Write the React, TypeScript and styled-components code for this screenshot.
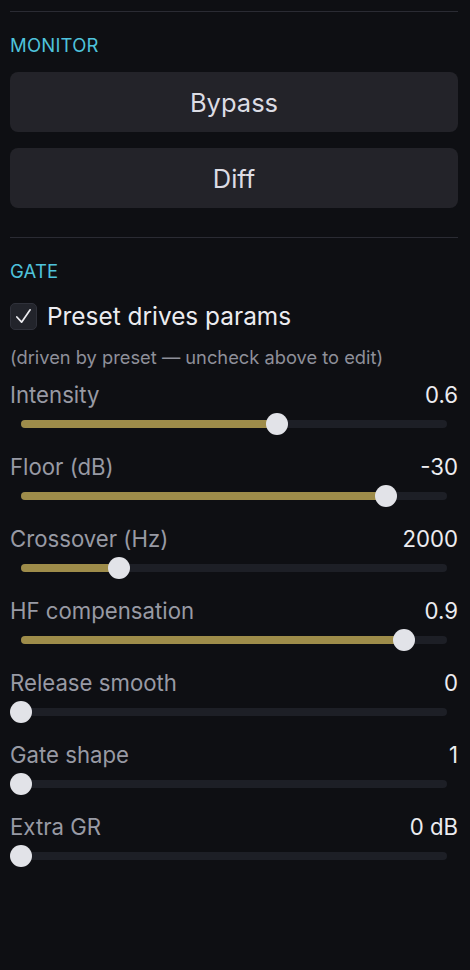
import React, { useState } from 'react';
import styled, { createGlobalStyle } from 'styled-components';

const Global = createGlobalStyle`
  html, body { margin: 0; padding: 0; background: #0e0f13; }
  body { font-family: Inter, "Noto Sans", sans-serif; -webkit-font-smoothing: antialiased; }
`;

const Panel = styled.div`
  background: #0e0f13;
  min-height: 970px;
  padding: 11px 12px 0 10px;
  box-sizing: border-box;
`;

const Section = styled.section`
  border-top: 1px solid #2a2b33;
  padding-top: 21px;
`;

const Heading = styled.div`
  color: #4ec3dc;
  font-size: 18.5px;
  line-height: 24px;
  letter-spacing: 0.2px;
  text-transform: uppercase;
`;

const ButtonStack = styled.div`
  display: flex;
  flex-direction: column;
  gap: 16px;
  margin-top: 15px;
  margin-bottom: 29px;
`;

const Btn = styled.button`
  height: 60px;
  border: none;
  border-radius: 8px;
  background: #232329;
  color: #dcdce4;
  font-family: Inter, sans-serif;
  font-size: 25.5px;
  cursor: pointer;
`;

const CheckRow = styled.label`
  display: flex;
  align-items: center;
  gap: 10px;
  margin-top: 18px;
  height: 30px;
  color: #ececf0;
  font-size: 24.4px;
  cursor: pointer;
`;

const Box = styled.span`
  width: 25px;
  height: 25px;
  border-radius: 5px;
  background: #22242b;
  border: 1px solid #2f313a;
  display: flex;
  align-items: center;
  justify-content: center;
`;

const Hint = styled.div`
  margin-top: 14px;
  color: #8e909a;
  font-size: 18.3px;
  line-height: 24px;
`;

const Params = styled.div`
  margin-top: 14px;
`;

const ParamRow = styled.div`
  height: 72px;
`;

const ParamHead = styled.div`
  display: flex;
  justify-content: space-between;
  line-height: 24px;
  font-size: 22.2px;
`;

const Label = styled.span`
  color: #989aa4;
`;

const Value = styled.span`
  color: #ececf0;
`;

const SliderBox = styled.div`
  height: 34px;
  padding: 0 11px;
  display: flex;
  align-items: center;
`;

const Track = styled.div`
  position: relative;
  flex: 1;
  height: 8px;
  border-radius: 4px;
  background: #1d1f26;
`;

const Fill = styled.div`
  height: 100%;
  border-radius: 4px;
  background: #9e8c4a;
`;

const Thumb = styled.div`
  position: absolute;
  top: 50%;
  width: 22px;
  height: 22px;
  border-radius: 50%;
  background: #e2e3e8;
  transform: translate(-50%, -50%);
`;

type Param = { label: string; value: string; frac: number };

const params: Param[] = [
  { label: 'Intensity', value: '0.6', frac: 0.6 },
  { label: 'Floor (dB)', value: '-30', frac: 0.856 },
  { label: 'Crossover (Hz)', value: '2000', frac: 0.23 },
  { label: 'HF compensation', value: '0.9', frac: 0.9 },
  { label: 'Release smooth', value: '0', frac: 0 },
  { label: 'Gate shape', value: '1', frac: 0 },
  { label: 'Extra GR', value: '0 dB', frac: 0 },
];

const Slider = ({ frac }: { frac: number }) => (
  <SliderBox>
    <Track>
      <Fill style={{ width: `${frac * 100}%` }} />
      <Thumb style={{ left: `${frac * 100}%` }} />
    </Track>
  </SliderBox>
);

const App = () => {
  const [checked, setChecked] = useState(true);
  return (
    <Panel>
      <Global />
      <Section>
        <Heading>Monitor</Heading>
        <ButtonStack>
          <Btn>Bypass</Btn>
          <Btn>Diff</Btn>
        </ButtonStack>
      </Section>
      <Section>
        <Heading>Gate</Heading>
        <CheckRow onClick={() => setChecked(!checked)}>
          <Box>
            {checked && (
              <svg width="19" height="19" viewBox="0 0 20 20">
                <path d="M3 10.5 L8 16 L17 3" fill="none" stroke="#ececf0" strokeWidth="1.8" strokeLinecap="round" strokeLinejoin="round" />
              </svg>
            )}
          </Box>
          Preset drives params
        </CheckRow>
        <Hint>(driven by preset — uncheck above to edit)</Hint>
        <Params>
          {params.map((p, i) => (
            <ParamRow key={i}>
              <ParamHead>
                <Label>{p.label}</Label>
                <Value>{p.value}</Value>
              </ParamHead>
              <Slider frac={p.frac} />
            </ParamRow>
          ))}
        </Params>
      </Section>
    </Panel>
  );
};

export default App;
